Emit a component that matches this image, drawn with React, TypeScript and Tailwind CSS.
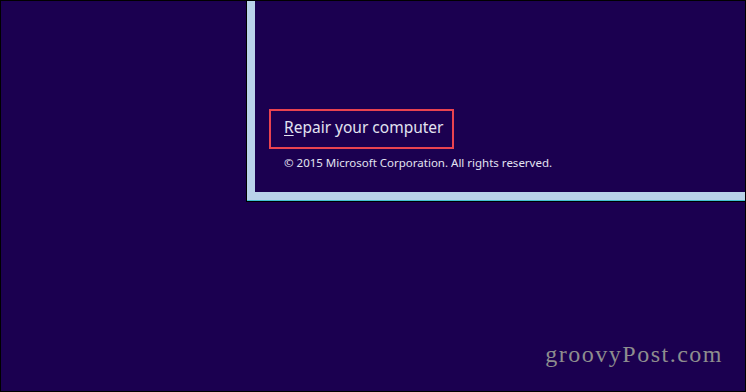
import React from "react";

export default function App() {
  return (
    <div className="w-[746px] h-[392px] bg-[#1b0050] border border-black overflow-hidden flex flex-col">
      <div className="ml-[245px] h-[201px] shrink-0 border-l border-b border-black">
        <div className="h-full border-b border-[#45c3d3] bg-[#bad2ea] pl-[8px] pb-[8px]">
          <div className="h-full bg-[#1b0050] pt-[108px] pl-[14px] flex flex-col items-start">
            <div className="w-[185px] h-[40px] border-2 border-[#ea4350] pl-[13px] flex items-center">
              <span
                className="text-[15.5px] leading-none text-[#e2e3f0] pb-[2px]"
                style={{ fontFamily: '"Noto Sans", sans-serif' }}
              >
                <span className="underline underline-offset-2">R</span>epair your computer
              </span>
            </div>
            <div
              className="mt-[7px] ml-[15px] text-[11.5px] leading-[14px] text-[#e2e3f0]"
              style={{ fontFamily: '"Noto Sans", sans-serif' }}
            >
              © 2015 Microsoft Corporation. All rights reserved.
            </div>
          </div>
        </div>
      </div>
      <div className="flex-1 flex justify-end items-start pt-[140px] pr-[22px]">
        <span
          className="text-[24px] leading-none tracking-[1.5px] text-[#8e8e8e]"
          style={{ fontFamily: '"Liberation Serif", serif' }}
        >
          groovyPost.com
        </span>
      </div>
    </div>
  );
}
